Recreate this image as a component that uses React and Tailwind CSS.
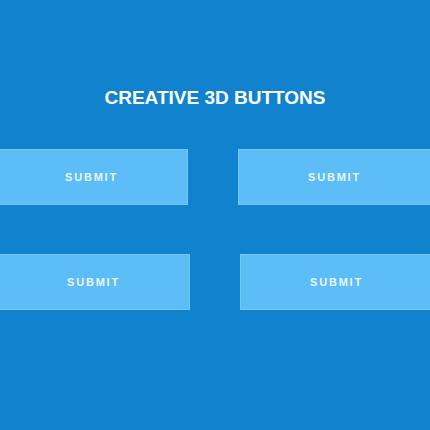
export default function App() {
  const rows = [
    { id: "top", shift: "-translate-x-[2px]" },
    { id: "bottom", shift: "" },
  ];

  return (
    <div className="h-[430px] w-full overflow-hidden bg-[#1182ce] font-['Liberation_Sans',Arial,sans-serif]">
      <h1 className="pt-[87px] text-center text-[19px] font-bold leading-[22px] text-white">
        CREATIVE 3D BUTTONS
      </h1>

      <div className="mt-[40px] flex flex-col gap-[49px]">
        {rows.map((row) => (
          <div key={row.id} className={`flex justify-center gap-[50px] ${row.shift}`}>
            {[0, 1].map((i) => (
              <button
                key={i}
                className="flex h-[56px] w-[193px] shrink-0 items-center justify-center border border-[#74c9fb] bg-[#5dbdf6] text-[11px] font-bold tracking-[1.8px] text-[#eaf6fe]"
              >
                SUBMIT
              </button>
            ))}
          </div>
        ))}
      </div>
    </div>
  );
}
